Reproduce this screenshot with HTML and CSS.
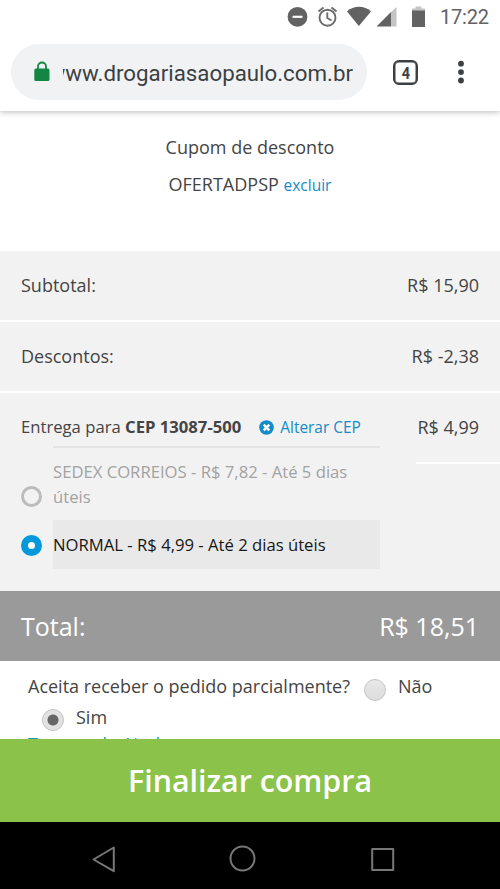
FILE: index.html
```html
<!DOCTYPE html>
<html lang="pt-BR">
<head>
<meta charset="utf-8">
<title>Finalizar compra</title>
<link rel="stylesheet" href="styles.css">
</head>
<body>
<div class="screen">
  <header class="browser">
    <div class="status">
      <svg width="150" height="34" viewBox="284 0 150 34">
        <g fill="#626262">
          <circle cx="297.500" cy="16.800" r="9.900"/>
          <path d="M358.800 26 347 11.500C353.500 5.300 364.500 5.300 371 11.500Z"/>
          <path d="M376.500 26.500 391 12V26.500Z"/>
          <path d="M412 10H425V27H412Z"/>
        </g>
        <path d="M391 12 396.500 7V26.500H391ZM412 8.500H415.500V6.500H421.500V8.500H425V10.500H412Z" fill="#c4c4c4"/>
        <path d="M292.500 16.800H302.500" stroke="#fff" stroke-width="2.200"/>
        <g fill="none" stroke="#6b6b6b" stroke-width="1.900">
          <circle cx="327.500" cy="17.700" r="8"/>
          <path d="M327.300 12.500V18L331.500 20.500M318.500 11.500 323.500 7.500M331.500 7.500 336.500 11.500"/>
        </g>
      </svg>
      <span class="clock">17:22</span>
    </div>
    <div class="toolbar">
      <div class="omnibox">
        <svg class="lock" width="16" height="21" viewBox="0 0 16 21"><path d="M4 8V5.500a4 4 0 0 1 8 0V8" fill="none" stroke="#128642" stroke-width="1.800"/><rect x=".3" y="7.500" width="15.200" height="12.500" rx="1.500" fill="#128642"/></svg>
        <div class="url"><span>www.drogariasaopaulo.com.br</span></div>
      </div>
      <div class="tabs"><span>4</span></div>
      <svg class="more" width="6" height="24" viewBox="0 0 6 24" fill="#3c4043"><circle cx="3" cy="3.700" r="2.900"/><circle cx="3" cy="12.100" r="2.900"/><circle cx="3" cy="20.500" r="2.900"/></svg>
    </div>
  </header>

  <main class="page">
    <section class="coupon">
      <div class="coupon-title">Cupom de desconto</div>
      <div class="coupon-code"><span>OFERTADPSP</span> <a>excluir</a></div>
    </section>

    <section class="summary">
      <div class="row"><span>Subtotal:</span><span>R$ 15,90</span></div>
      <div class="row"><span>Descontos:</span><span>R$ -2,38</span></div>
      <div class="delivery">
        <div class="delivery-main">
          <div class="delivery-head">
            <span class="deliver-to">Entrega para <b>CEP 13087-500</b></span>
            <svg width="15" height="15" viewBox="0 0 15 15"><circle cx="7.500" cy="7.500" r="7.300" fill="#158bc8"/><path d="M4.700 4.700 10.300 10.300M10.300 4.700 4.700 10.300" stroke="#fff" stroke-width="2.500"/></svg>
            <a>Alterar CEP</a>
          </div>
          <div class="option option-off">
            <i class="ring"></i>
            <div class="label">SEDEX CORREIOS - R$ 7,82 - Até 5 dias<br>úteis</div>
          </div>
          <div class="option option-on">
            <i class="ring ring-on"></i>
            <div class="label">NORMAL - R$ 4,99 - Até 2 dias úteis</div>
          </div>
        </div>
        <div class="delivery-price">R$ 4,99</div>
      </div>
    </section>

    <div class="total"><span>Total:</span><span>R$ 18,51</span></div>

    <section class="partial">
      <div class="partial-line"><span class="question">Aceita receber o pedido parcialmente?</span><i class="radio"></i><span>Não</span></div>
      <div class="partial-line second"><i class="radio checked"></i><span>Sim</span></div>
      <a class="terms">Termos de Ajuda</a>
    </section>
  </main>

  <div class="checkout"><span>Finalizar compra</span></div>
  <nav class="navbar">
    <svg width="500" height="66" viewBox="0 0 500 66" fill="none" stroke="#777" stroke-width="2" stroke-linejoin="round"><path d="M93.500 37.500 113.800 25.500V49.200Z"/><circle cx="242.500" cy="36.500" r="12"/><rect x="372.200" y="27" width="21" height="21"/></svg>
  </nav>
</div>
</body>
</html>
```
FILE: styles.css
```css
* { box-sizing: border-box; }
body { margin: 0; background: #fff; }
.screen { width: 500px; height: 889px; display: flex; flex-direction: column; overflow: hidden; font: 18px/24px "Open Sans", sans-serif; color: #444; white-space: nowrap; }
a { color: #158bc8; }

.browser { height: 111px; flex: none; background: #fff; box-shadow: 0 1px 6px rgba(0,0,0,.28); font-family: Roboto, sans-serif; z-index: 1; }
.status { height: 34px; display: flex; padding-left: 284px; }
.clock { margin-left: 6px; font-size: 20px; line-height: 34px; color: #626262; letter-spacing: -.2px; }
.toolbar { height: 77px; display: flex; align-items: flex-start; padding: 10px 0 0 11px; }
.omnibox { width: 356px; height: 56px; border-radius: 28px; background: #f1f2f4; display: flex; padding-left: 23px; }
.lock { margin-top: 17px; flex: none; }
.url { width: 290px; margin-left: 13px; overflow: hidden; display: flex; justify-content: flex-end; font-size: 22.300px; line-height: 58px; color: #3c4043; }
.tabs { width: 25px; height: 25px; margin: 16px 0 0 26px; border: 2px solid #3c4043; border-radius: 6px; box-shadow: inset 0 0 0 .5px #3c4043; font-weight: 700; font-size: 17px; line-height: 22px; text-align: center; color: #3c4043; }
.tabs span { display: inline-block; transform: scaleX(.85); }
.more { margin: 16px 0 0 40px; }

.page { height: 628px; flex: none; overflow: hidden; }
.coupon { height: 140px; padding-top: 24px; text-align: center; }
.coupon-code { margin-top: 13px; }
.coupon-code a { font-size: 15.500px; }

.summary { background: #f2f2f2; height: 340px; }
.row { height: 71px; padding: 0 21px; display: flex; justify-content: space-between; line-height: 69px; border-bottom: 2px solid #fff; }
.delivery { height: 198px; display: flex; justify-content: space-between; }
.delivery-main { width: 380px; padding-left: 21px; font-size: 16.670px; }
.delivery-head { height: 53px; display: flex; align-items: center; padding-top: 15px; }
.delivery-head svg { flex: none; margin: 0 6px 0 18px; }
.delivery-head a { font-size: 15.400px; padding-top: 1px; }
.option { display: flex; }
.option .label { flex: 1; margin-left: 11px; }
.option-off { color: #a2a2a2; height: 74px; align-items: flex-start; }
.option-off .label { border-top: 2px solid #e4e4e4; padding-top: 11px; line-height: 25px; height: 74px; }
.ring { width: 21px; height: 21px; border: 3px solid #bcbcbc; border-radius: 50%; flex: none; }
.option-off .ring { margin-top: 40px; }
.ring-on { border: 7px solid #0698dc; background: #fff; margin-top: 1px; }
.option-on { height: 49px; align-items: center; color: #161616; }
.option-on .label { background: #e9e9e9; line-height: 50px; height: 49px; }
.delivery-price { width: 84px; height: 71px; padding-right: 21px; text-align: right; line-height: 69px; border-bottom: 2px solid #fff; }

.total { height: 70px; background: #9a9a9a; color: #fff; display: flex; justify-content: space-between; padding: 0 21px; font-size: 25px; line-height: 70px; }
.partial { padding: 11px 0 0 28px; }
.partial-line { display: flex; height: 31px; line-height: 28px; }
.radio { width: 22px; height: 22px; margin: 6px 12px 0 14px; border: 1px solid #c4c4c4; border-radius: 50%; background: linear-gradient(#e8e8e8, #dcdcdc); flex: none; }
.question + .radio { margin-top: 7px; }
.checked { background: radial-gradient(circle, #666 0 5px, #e2e2e2 6px); }
.terms { display: block; line-height: 24px; margin-top: -2px; color: #169ab5; }

.checkout { height: 83px; flex: none; background: #8bc34a; color: #fff; text-align: center; font-size: 30.400px; font-weight: 600; line-height: 84px; }
.navbar { height: 67px; flex: none; background: #000; }
```
